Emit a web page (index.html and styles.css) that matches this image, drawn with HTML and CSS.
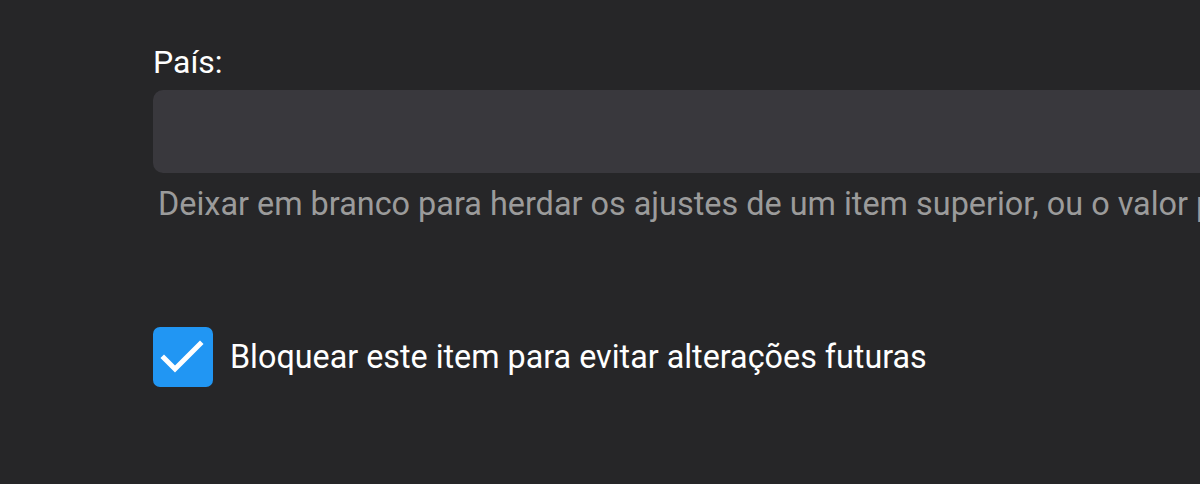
FILE: index.html
```html
<!DOCTYPE html>
<html>
<head>
<meta charset="utf-8">
<link rel="stylesheet" href="styles.css">
</head>
<body>
<div class="form">
  <div class="field">
    <label class="field-label" for="country">País:</label>
    <input class="field-input" id="country" type="text">
    <div class="field-help">Deixar em branco para herdar os ajustes de um item superior, ou o valor padrão global.</div>
  </div>
  <label class="check">
    <span class="check-box">
      <svg viewBox="0 0 60 60" width="60" height="60"><path d="M11 31 L22 42 L47 17" fill="none" stroke="#fff" stroke-width="5" stroke-linecap="square"/></svg>
    </span>
    <span class="check-label">Bloquear este item para evitar alterações futuras</span>
  </label>
</div>
</body>
</html>
```
FILE: styles.css
```css
html, body {
  margin: 0;
  padding: 0;
  background: #262628;
  height: 100%;
  overflow: hidden;
}
body {
  font-family: Roboto, "Noto Sans", sans-serif;
  color: #fff;
}
.form {
  padding: 42px 0 0 153px;
  display: flex;
  flex-direction: column;
}
.field {
  display: flex;
  flex-direction: column;
  width: 1047px;
  overflow: hidden;
}
.field-label {
  font-size: 32px;
  line-height: 40px;
  margin-bottom: 8px;
}
.field-input {
  box-sizing: border-box;
  height: 83px;
  border: none;
  border-radius: 10px 0 0 10px;
  background: #39383d;
  margin: 0;
  outline: none;
}
.field-help {
  font-size: 32.4px;
  line-height: 40px;
  color: #9b9b9b;
  margin-top: 11px;
  padding-left: 5px;
  white-space: nowrap;
}
.check {
  display: flex;
  align-items: center;
  margin-top: 103px;
  gap: 17px;
}
.check-box {
  width: 60px;
  height: 60px;
  border-radius: 7px;
  background: #2196f3;
  display: flex;
}
.check-label {
  font-size: 32.3px;
  line-height: 40px;
}
```
